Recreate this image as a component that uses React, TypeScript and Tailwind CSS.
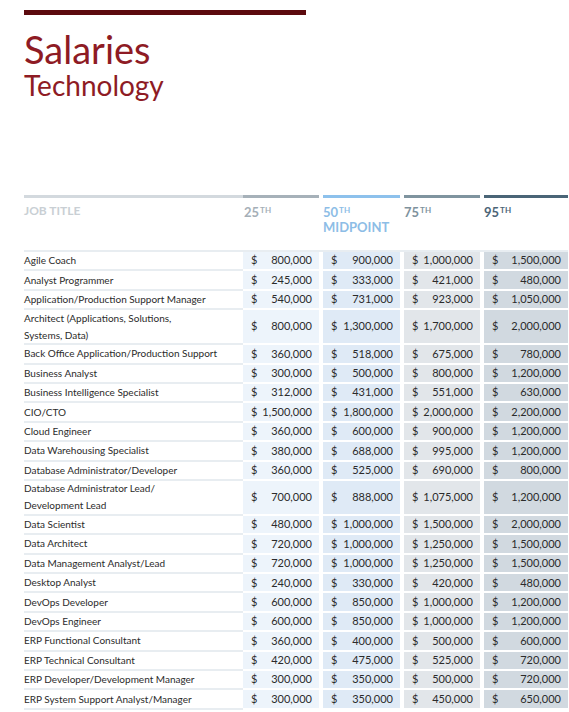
const rows: [string, string, string, string, string][] = [
  ["Agile Coach", "800,000", "900,000", "1,000,000", "1,500,000"],
  ["Analyst Programmer", "245,000", "333,000", "421,000", "480,000"],
  ["Application/Production Support Manager", "540,000", "731,000", "923,000", "1,050,000"],
  ["Architect (Applications, Solutions,\nSystems, Data)", "800,000", "1,300,000", "1,700,000", "2,000,000"],
  ["Back Office Application/Production Support", "360,000", "518,000", "675,000", "780,000"],
  ["Business Analyst", "300,000", "500,000", "800,000", "1,200,000"],
  ["Business Intelligence Specialist", "312,000", "431,000", "551,000", "630,000"],
  ["CIO/CTO", "1,500,000", "1,800,000", "2,000,000", "2,200,000"],
  ["Cloud Engineer", "360,000", "600,000", "900,000", "1,200,000"],
  ["Data Warehousing Specialist", "380,000", "688,000", "995,000", "1,200,000"],
  ["Database Administrator/Developer", "360,000", "525,000", "690,000", "800,000"],
  ["Database Administrator Lead/\nDevelopment Lead", "700,000", "888,000", "1,075,000", "1,200,000"],
  ["Data Scientist", "480,000", "1,000,000", "1,500,000", "2,000,000"],
  ["Data Architect", "720,000", "1,000,000", "1,250,000", "1,500,000"],
  ["Data Management Analyst/Lead", "720,000", "1,000,000", "1,250,000", "1,500,000"],
  ["Desktop Analyst", "240,000", "330,000", "420,000", "480,000"],
  ["DevOps Developer", "600,000", "850,000", "1,000,000", "1,200,000"],
  ["DevOps Engineer", "600,000", "850,000", "1,000,000", "1,200,000"],
  ["ERP Functional Consultant", "360,000", "400,000", "500,000", "600,000"],
  ["ERP Technical Consultant", "420,000", "475,000", "525,000", "720,000"],
  ["ERP Developer/Development Manager", "300,000", "350,000", "500,000", "720,000"],
  ["ERP System Support Analyst/Manager", "300,000", "350,000", "450,000", "650,000"],
]

function Money({ value, className }: { value: string; className: string }) {
  return (
    <div className={`flex items-center justify-between pl-[8px] pr-[7px] ${className}`}>
      <span>$</span>
      <span>{value}</span>
    </div>
  )
}

function Th({ n }: { n: string }) {
  return (
    <>
      {n}
      <span className="text-[8px] align-[4px] ml-[1px]">TH</span>
    </>
  )
}

export default function App() {
  return (
    <div className="min-h-screen bg-white pl-[24px] pt-[10px] font-['Lato',sans-serif]">
      <div className="w-[282px] h-[5px] bg-[#5c0a0e]" />
      <h1 className="mt-[14px] text-[38px] leading-[40px] font-normal text-[#8e1b24]">Salaries</h1>
      <h2 className="text-[28px] leading-[32px] font-normal text-[#8e1b24]">Technology</h2>

      <div className="mt-[94px] flex text-[13px] font-bold leading-[15px]">
        <div className="w-[219px]">
          <div className="h-[3px] bg-[#d3d9de]" />
          <div className="pt-[5px] text-[12px] text-[#c9cfd4]">JOB TITLE</div>
        </div>
        <div className="w-[76px]">
          <div className="h-[3px] bg-[#a6b1b9]" />
          <div className="pt-[5px] pl-[1px] text-[#a5afb7]"><Th n="25" /></div>
        </div>
        <div className="w-[77px] ml-[4px]">
          <div className="h-[3px] bg-[#8dc1ec]" />
          <div className="pt-[5px] text-[#8dbde6]">
            <div><Th n="50" /></div>
            <div>MIDPOINT</div>
          </div>
        </div>
        <div className="w-[76px] ml-[4px]">
          <div className="h-[3px] bg-[#7f949f]" />
          <div className="pt-[5px] text-[#7e929d]"><Th n="75" /></div>
        </div>
        <div className="w-[84px] ml-[4px]">
          <div className="h-[3px] bg-[#4a6577]" />
          <div className="pt-[5px] text-[#4c6577]"><Th n="95" /></div>
        </div>
      </div>

      <div className="mt-[15px] w-[544px] h-[2px] bg-[#e8edf1]" />

      <div className="text-[11px] text-[#2b2b2b]">
        {rows.map(([title, p25, p50, p75, p95]) => {
          const tall = title.includes("\n")
          const h = tall ? "h-[35px]" : "h-[19.4px]"
          return (
            <div key={title} className={`flex ${h}`}>
              <div className="w-[219px] border-b-2 border-[#e8edf1] flex items-center text-[10px] leading-[17px] whitespace-pre-line">
                {title}
              </div>
              <div className="flex flex-col w-[76px]">
                <Money value={p25} className="flex-1 bg-[#edf4fb]" />
                <div className="h-[2px]" />
              </div>
              <div className="flex flex-col w-[77px] ml-[4px]">
                <Money value={p50} className="flex-1 bg-[#dfeaf6]" />
                <div className="h-[2px]" />
              </div>
              <div className="flex flex-col w-[76px] ml-[4px]">
                <Money value={p75} className="flex-1 bg-[#e2e6ea]" />
                <div className="h-[2px]" />
              </div>
              <div className="flex flex-col w-[84px] ml-[4px]">
                <Money value={p95} className="flex-1 bg-[#d1d9e0]" />
                <div className="h-[2px]" />
              </div>
            </div>
          )
        })}
      </div>
    </div>
  )
}
